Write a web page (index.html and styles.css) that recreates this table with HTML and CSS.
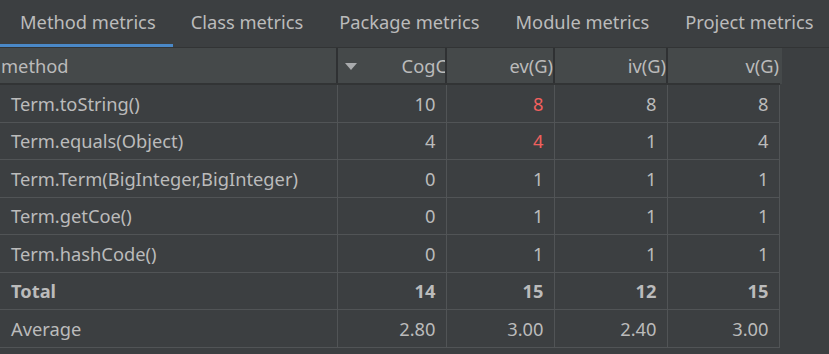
FILE: index.html
```html
<!DOCTYPE html>
<html>
<head>
<meta charset="utf-8">
<link rel="stylesheet" href="styles.css">
</head>
<body>
<div class="tabs">
  <div class="tab active">Method metrics</div>
  <div class="tab">Class metrics</div>
  <div class="tab">Package metrics</div>
  <div class="tab">Module metrics</div>
  <div class="tab">Project metrics</div>
</div>
<div class="grid-wrap">
  <table class="grid">
    <colgroup>
      <col class="c-name"><col class="c1"><col class="c2"><col class="c3"><col class="c4">
    </colgroup>
    <thead>
      <tr>
        <th class="h-name"><span class="h-left">method</span></th>
        <th class="h-num sorted"><span class="sort-arrow"></span><span class="h-clip">CogC</span></th>
        <th class="h-num">ev(G)</th>
        <th class="h-num">iv(G)</th>
        <th class="h-num">v(G)</th>
      </tr>
    </thead>
    <tbody>
      <tr><td>Term.toString()</td><td class="n">10</td><td class="n red">8</td><td class="n">8</td><td class="n">8</td></tr>
      <tr><td>Term.equals(Object)</td><td class="n">4</td><td class="n red">4</td><td class="n">1</td><td class="n">4</td></tr>
      <tr><td>Term.Term(BigInteger,BigInteger)</td><td class="n">0</td><td class="n">1</td><td class="n">1</td><td class="n">1</td></tr>
      <tr><td>Term.getCoe()</td><td class="n">0</td><td class="n">1</td><td class="n">1</td><td class="n">1</td></tr>
      <tr><td>Term.hashCode()</td><td class="n">0</td><td class="n">1</td><td class="n">1</td><td class="n">1</td></tr>
      <tr class="bold"><td>Total</td><td class="n">14</td><td class="n">15</td><td class="n">12</td><td class="n">15</td></tr>
      <tr><td>Average</td><td class="n">2.80</td><td class="n">3.00</td><td class="n">2.40</td><td class="n">3.00</td></tr>
    </tbody>
  </table>
</div>
</body>
</html>
```
FILE: styles.css
```css
html, body {
  margin: 0;
  padding: 0;
  background: #3c3f41;
  width: 829px;
  height: 354px;
  overflow: hidden;
}
body {
  font-family: "Noto Sans", "Open Sans", sans-serif;
  font-size: 18.3px;
  color: #bbbbbb;
}
.tabs {
  display: flex;
  height: 47px;
  border-bottom: 1px solid #323435;
  box-sizing: content-box;
}
.tab {
  padding: 0 18px;
  line-height: 44px;
  height: 44px;
  border-bottom: 3px solid transparent;
  white-space: nowrap;
}
.tab.active {
  padding: 0 17px 0 20px;
  border-bottom-color: #4a88c7;
}
.grid-wrap {
  width: 782px;
}
.grid {
  border-collapse: collapse;
  table-layout: fixed;
  width: 779px;
}
.c-name { width: 337px; }
.c1 { width: 109px; }
.c2 { width: 108px; }
.c3 { width: 113px; }
.c4 { width: 112px; }
thead th {
  background: #45494a;
  height: 35px;
  padding: 0;
  font-weight: normal;
  border-left: 2px solid #2f3133;
  border-bottom: 2px solid #323435;
  white-space: nowrap;
  overflow: hidden;
}
thead th:first-child { border-left: none; }
thead tr { box-shadow: 3px 0 0 #45494a; }
.h-name { text-align: left; }
.h-left { margin-left: 1px; }
.h-num { text-align: right; padding-right: 0; }
.sorted { position: relative; }
.sort-arrow {
  position: absolute;
  left: 7px;
  top: 15px;
  width: 0;
  height: 0;
  border-left: 6px solid transparent;
  border-right: 6px solid transparent;
  border-top: 7px solid #a9abad;
}
.h-clip { margin-right: -2px; }
tbody td {
  height: 36.5px;
  padding: 0 0 0 11px;
  border: 1px solid #515456;
  border-top: none;
  white-space: nowrap;
  overflow: hidden;
}
tbody td:first-child { border-left: none; }
tbody td.n {
  text-align: right;
  padding: 0 10px 0 0;
}
.red { color: #f0605e; }
.bold td { font-weight: bold; }
```
